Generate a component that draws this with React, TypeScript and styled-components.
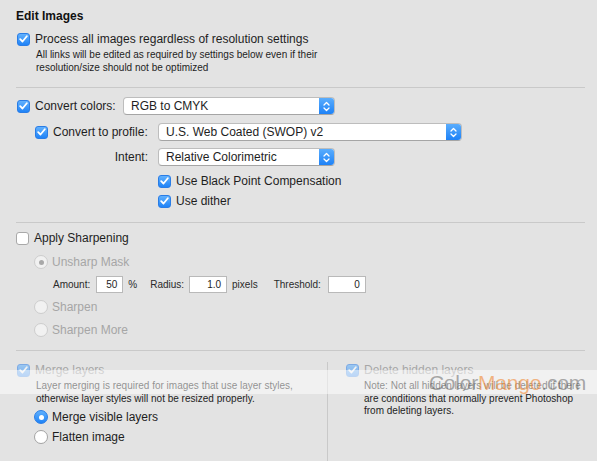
import styled, { createGlobalStyle, css } from 'styled-components'

const GlobalStyle = createGlobalStyle`
  html, body {
    margin: 0;
    padding: 0;
    background: #e3e3e3;
  }
  body {
    font-family: 'Liberation Sans', Arial, sans-serif;
    color: #1e1e1e;
    -webkit-font-smoothing: antialiased;
  }
`

const Page = styled.div`
  position: relative;
  width: 597px;
  height: 461px;
  overflow: hidden;
  background: #e3e3e3;
  box-sizing: border-box;
  padding: 8px 12px 0 16px;
`

const Title = styled.div`
  font-size: 12px;
  font-weight: bold;
  line-height: 16px;
  color: #111;
`

const Row = styled.div<{ $top?: number; $indent?: number; $h?: number }>`
  display: flex;
  align-items: center;
  height: ${(p) => p.$h ?? 16}px;
  margin-top: ${(p) => p.$top ?? 0}px;
  padding-left: ${(p) => p.$indent ?? 0}px;
`

const Label = styled.span<{ $disabled?: boolean; $w?: number; $right?: boolean }>`
  font-size: 12px;
  white-space: nowrap;
  color: ${(p) => (p.$disabled ? '#a6a6a6' : '#1e1e1e')};
  ${(p) =>
    p.$w !== undefined &&
    css`
      width: ${p.$w}px;
      flex: none;
    `}
  ${(p) =>
    p.$right &&
    css`
      text-align: right;
      padding-right: 10px;
      box-sizing: border-box;
    `}
`

const Note = styled.div<{ $top?: number; $indent?: number; $lh?: number }>`
  font-size: 10px;
  line-height: ${(p) => p.$lh ?? 13}px;
  margin-top: ${(p) => p.$top ?? 0}px;
  padding-left: ${(p) => p.$indent ?? 0}px;
  white-space: nowrap;
  color: #1e1e1e;
`

const Separator = styled.div<{ $top: number }>`
  height: 1px;
  background: #c9c9c9;
  margin-top: ${(p) => p.$top}px;
`

const Box = styled.span<{ $checked?: boolean; $dim?: boolean }>`
  flex: none;
  box-sizing: border-box;
  width: 13px;
  height: 13px;
  border-radius: 3px;
  margin-right: 5px;
  display: inline-flex;
  align-items: center;
  justify-content: center;
  ${(p) =>
    p.$checked
      ? css`
          background: linear-gradient(#62b1fd, #1f83f7);
          border: 1px solid #2a7de6;
        `
      : css`
          background: #fff;
          border: 1px solid #a9a9a9;
        `}
  opacity: ${(p) => (p.$dim ? 0.55 : 1)};
`

const Radio = styled.span<{ $on?: boolean; $disabled?: boolean }>`
  flex: none;
  box-sizing: border-box;
  width: 14px;
  height: 14px;
  border-radius: 50%;
  margin-right: 4px;
  display: inline-flex;
  align-items: center;
  justify-content: center;
  ${(p) =>
    p.$disabled
      ? css`
          background: #f1f1f1;
          border: 1px solid #cdcdcd;
        `
      : p.$on
        ? css`
            background: linear-gradient(#5fb0fd, #1f83f7);
            border: 1px solid #2a7de6;
          `
        : css`
            background: #fff;
            border: 1px solid #a3a3a3;
          `}
`

const Dot = styled.span<{ $disabled?: boolean }>`
  width: 5px;
  height: 5px;
  border-radius: 50%;
  background: ${(p) => (p.$disabled ? '#a8a8a8' : '#fff')};
`

const Popup = styled.div<{ $w: number }>`
  flex: none;
  box-sizing: border-box;
  width: ${(p) => p.$w}px;
  height: 18px;
  display: flex;
  align-items: stretch;
  background: #fff;
  border: 1px solid #bdbdbd;
  border-bottom-color: #a5a5a5;
  border-radius: 4px;
  overflow: hidden;
  font-size: 12px;
`

const PopupText = styled.span`
  flex: 1;
  padding-left: 7px;
  line-height: 16px;
  color: #1e1e1e;
`

const PopupArrow = styled.span`
  width: 15px;
  background: linear-gradient(#5aadfd, #1e82f7);
  display: flex;
  align-items: center;
  justify-content: center;
`

const Field = styled.span<{ $w: number; $gap: number }>`
  flex: none;
  box-sizing: border-box;
  width: ${(p) => p.$w}px;
  height: 17px;
  margin-left: ${(p) => p.$gap}px;
  margin-right: 5px;
  background: #fff;
  border: 1px solid #b9b9b9;
  font-size: 10px;
  line-height: 15px;
  text-align: right;
  padding-right: 5px;
  color: #1e1e1e;
`

const SmallLabel = styled.span<{ $gap?: number }>`
  font-size: 10px;
  color: #2a2a2a;
  margin-left: ${(p) => p.$gap ?? 0}px;
  white-space: nowrap;
`

const Columns = styled.div`
  display: flex;
  margin-top: 11px;
`

const LeftCol = styled.div`
  width: 311px;
  flex: none;
  border-right: 1px solid #c9c9c9;
  height: 110px;
`

const RightCol = styled.div`
  flex: 1;
  padding-left: 18px;
`

const Watermark = styled.div`
  position: absolute;
  left: 0;
  right: 0;
  top: 370px;
  height: 24px;
  background: rgba(255, 255, 255, 0.5);
  display: flex;
  justify-content: flex-end;
  padding-right: 11px;
  font-size: 21px;
  line-height: 26px;
  letter-spacing: -0.2px;
  font-family: 'Liberation Sans', Arial, sans-serif;
`

const Mark = styled.span<{ $orange?: boolean }>`
  color: ${(p) => (p.$orange ? 'rgba(240, 135, 50, 0.6)' : 'rgba(90, 90, 90, 0.5)')};
`

function Check({ checked = true, dim }: { checked?: boolean; dim?: boolean }) {
  return (
    <Box $checked={checked} $dim={dim}>
      {checked && (
        <svg width='9' height='8' viewBox='0 0 9 8'>
          <path d='M1.2 4.2 L3.5 6.5 L7.8 1.2' fill='none' stroke='#fff' strokeWidth='1.8' strokeLinecap='round' strokeLinejoin='round' />
        </svg>
      )}
    </Box>
  )
}

function Select({ value, width }: { value: string; width: number }) {
  return (
    <Popup $w={width}>
      <PopupText>{value}</PopupText>
      <PopupArrow>
        <svg width='7' height='11' viewBox='0 0 7 11'>
          <path d='M1 4 L3.5 1.5 L6 4 M1 7 L3.5 9.5 L6 7' fill='none' stroke='#fff' strokeWidth='1.3' strokeLinecap='round' strokeLinejoin='round' />
        </svg>
      </PopupArrow>
    </Popup>
  )
}

function RadioItem({ label, on, disabled, top, indent }: { label: string; on?: boolean; disabled?: boolean; top: number; indent: number }) {
  return (
    <Row $top={top} $indent={indent}>
      <Radio $on={on} $disabled={disabled}>
        {on && <Dot $disabled={disabled} />}
      </Radio>
      <Label $disabled={disabled}>{label}</Label>
    </Row>
  )
}

export default function App() {
  return (
    <Page>
      <GlobalStyle />
      <Title>Edit Images</Title>

      <Row $top={8} $indent={1} $h={14}>
        <Check />
        <Label>Process all images regardless of resolution settings</Label>
      </Row>
      <Note $top={2} $indent={20}>
        All links will be edited as required by settings below even if their
        <br />
        resolution/size should not be optimized
      </Note>

      <Separator $top={13} />

      <Row $top={9} $indent={1} $h={18}>
        <Check />
        <Label $w={88}>Convert colors:</Label>
        <Select value='RGB to CMYK' width={212} />
      </Row>
      <Row $top={8} $indent={19} $h={18}>
        <Check />
        <Label $w={105}>Convert to profile:</Label>
        <Select value='U.S. Web Coated (SWOP) v2' width={304} />
      </Row>
      <Row $top={7} $indent={37} $h={18}>
        <Label $w={105} $right>
          Intent:
        </Label>
        <Select value='Relative Colorimetric' width={177} />
      </Row>
      <Row $top={7} $indent={142}>
        <Check />
        <Label>Use Black Point Compensation</Label>
      </Row>
      <Row $top={4} $indent={142}>
        <Check />
        <Label>Use dither</Label>
      </Row>

      <Separator $top={13} />

      <Row $top={7} $indent={0}>
        <Check checked={false} />
        <Label>Apply Sharpening</Label>
      </Row>
      <RadioItem label='Unsharp Mask' on disabled top={8} indent={18} />
      <Row $top={5} $indent={37} $h={18}>
        <SmallLabel>Amount:</SmallLabel>
        <Field $w={27} $gap={6}>50</Field>
        <SmallLabel>%</SmallLabel>
        <SmallLabel $gap={13}>Radius:</SmallLabel>
        <Field $w={38} $gap={5}>1.0</Field>
        <SmallLabel>pixels</SmallLabel>
        <SmallLabel $gap={16}>Threshold:</SmallLabel>
        <Field $w={38} $gap={7}>0</Field>
      </Row>
      <RadioItem label='Sharpen' disabled top={6} indent={18} />
      <RadioItem label='Sharpen More' disabled top={7} indent={18} />

      <Separator $top={12} />

      <Columns>
        <LeftCol>
          <Row $indent={1}>
            <Check dim />
            <Label $disabled>Merge layers</Label>
          </Row>
          <Note $top={2} $indent={20} $lh={12.5}>
            Layer merging is required for images that use layer styles,
            <br />
            otherwise layer styles will not be resized properly.
          </Note>
          <RadioItem label='Merge visible layers' on top={4} indent={18} />
          <RadioItem label='Flatten image' top={4} indent={18} />
        </LeftCol>
        <RightCol>
          <Row>
            <Check dim />
            <Label $disabled>Delete hidden layers</Label>
          </Row>
          <Note $top={2} $indent={18} $lh={12.5}>
            Note: Not all hidden layers will be deleted if there
            <br />
            are conditions that normally prevent Photoshop
            <br />
            from deleting layers.
          </Note>
        </RightCol>
      </Columns>

      <Watermark>
        <Mark>Color</Mark>
        <Mark $orange>Mango</Mark>
        <Mark>.com</Mark>
      </Watermark>
    </Page>
  )
}
